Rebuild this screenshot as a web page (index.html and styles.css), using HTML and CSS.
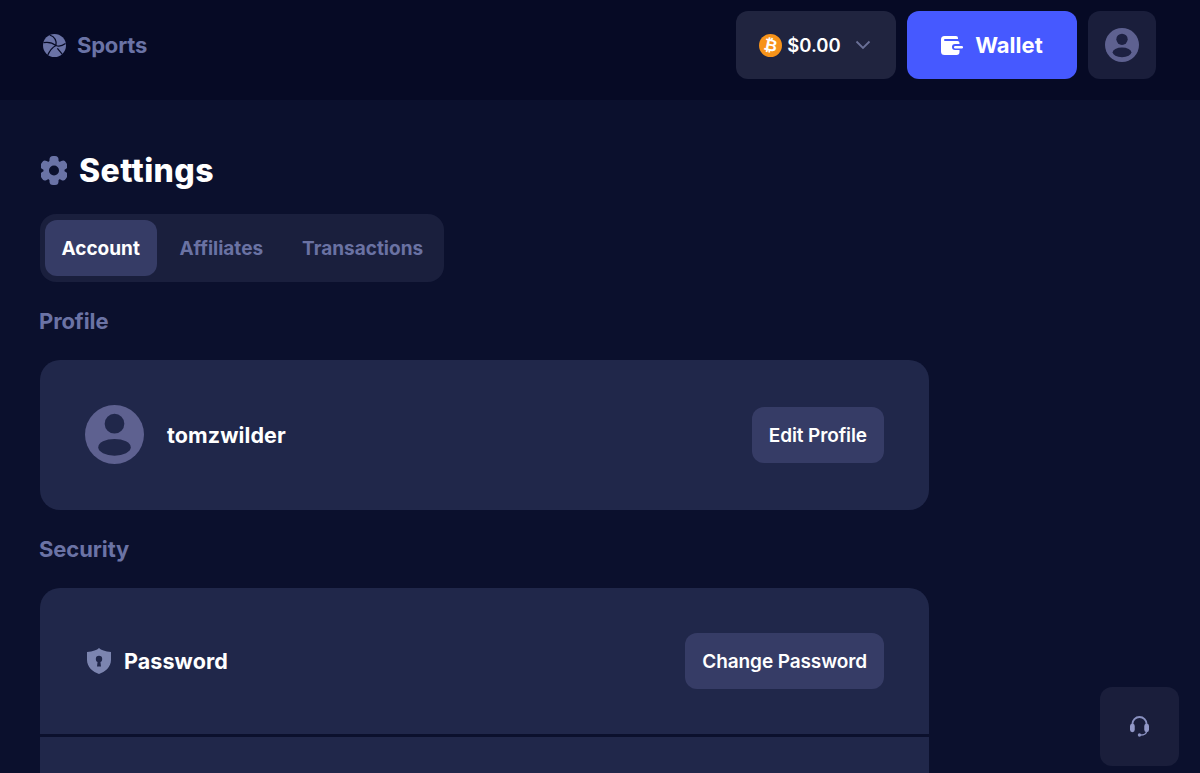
FILE: index.html
```html
<!DOCTYPE html>
<html lang="en">

<head>
    <meta charset="UTF-8">
    <meta name="viewport" content="width=device-width, initial-scale=1.0">
    <title>Settings</title>
    <link rel="stylesheet" href="styles.css">
</head>

<body>
    <header class="topbar">
        <a class="sports-link" href="#">
            <svg class="sports-icon" viewBox="0 0 24 24">
                <circle cx="12" cy="12" r="12" fill="#6a73a6" />
                <path d="M7 1 Q15 4 13.500 12 M0.500 9 Q8 7.500 13.500 12 Q8 15 5 22 M13.500 12 Q18 14 23.500 10 M15 15 L20 21" fill="none" stroke="#060a25" stroke-width="1.300" />
            </svg>
            <span>Sports</span>
        </a>
        <div class="topbar-actions">
            <button class="balance">
                <svg class="coin" viewBox="0 0 24 24">
                    <circle cx="12" cy="12" r="12" fill="#f7931a" />
                    <text x="12" y="17.500" text-anchor="middle" class="coin-mark" transform="rotate(12 12 12)">₿</text>
                </svg>
                <span class="balance-value">$0.00</span>
                <svg class="chevron" viewBox="0 0 16 10">
                    <path d="M1.500 1.500 L8 8 L14.500 1.500" fill="none" stroke="#6a7097" stroke-width="1.800" />
                </svg>
            </button>
            <button class="wallet">
                <svg class="wallet-icon" viewBox="0 0 22 19">
                    <path d="M3.500 0 H15 a2 2 0 0 1 2 2 V3 H4 a1 1 0 0 0 0 2 H16.500 a2 2 0 0 1 2 2 V8 H14 a3 3 0 0 0 0 6 H18.500 V16 a3 3 0 0 1 -3 3 H3.500 A3.500 3.500 0 0 1 0 15.500 V3.500 A3.500 3.500 0 0 1 3.500 0 Z" fill="#fff" />
                    <rect x="13" y="10" width="9" height="2.400" rx="1.200" fill="#fff" />
                </svg>
                <span>Wallet</span>
            </button>
            <button class="account-btn">
                <svg class="user-icon user-icon-small" viewBox="0 0 60 60">
                    <circle cx="30" cy="30" r="30" fill="#5e6190" />
                    <circle cx="30" cy="20" r="10" fill="#1d2142" />
                    <ellipse cx="30" cy="43" rx="16.500" ry="8.500" fill="#1d2142" />
                </svg>
            </button>
        </div>
    </header>

    <main class="page">
        <h1 class="page-title">
            <svg class="gear" viewBox="0 0 26 29">
                <g fill="#6a73a6">
                    <circle cx="13" cy="14.500" r="10.500" />
                    <rect x="8.500" y="0" width="9" height="29" rx="3.500" />
                    <rect x="8.500" y="0" width="9" height="29" rx="3.500" transform="rotate(60 13 14.500)" />
                    <rect x="8.500" y="0" width="9" height="29" rx="3.500" transform="rotate(120 13 14.500)" />
                </g>
                <circle cx="13" cy="14.500" r="5" fill="#0b102d" />
            </svg>
            Settings
        </h1>

        <nav class="tabs">
            <a class="tab active" href="#">Account</a>
            <a class="tab" href="#">Affiliates</a>
            <a class="tab" href="#">Transactions</a>
        </nav>

        <h2 class="section-title">Profile</h2>
        <section class="card">
            <div class="row profile-row">
                <div class="row-left">
                    <svg class="user-icon" viewBox="0 0 60 60">
                        <circle cx="30" cy="30" r="30" fill="#5e6190" />
                        <circle cx="30" cy="19" r="10" fill="#20274a" />
                        <ellipse cx="30" cy="43" rx="16.500" ry="8.500" fill="#20274a" />
                    </svg>
                    <span class="username">tomzwilder</span>
                </div>
                <button class="row-btn">Edit Profile</button>
            </div>
        </section>

        <h2 class="section-title">Security</h2>
        <section class="card">
            <div class="row password-row">
                <div class="row-left">
                    <svg class="shield" viewBox="0 0 24 26">
                        <path fill="#7c85b0" d="M12 0 C14 2 18 3.500 24 4 V12 C24 19 18 24 12 26 C6 24 0 19 0 12 V4 C6 3.500 10 2 12 0 Z" />
                        <circle cx="12" cy="11" r="3.200" fill="#20274a" />
                        <path d="M10.800 12 H13.200 L14 18.500 H10 Z" fill="#20274a" />
                    </svg>
                    <span class="row-label">Password</span>
                </div>
                <button class="row-btn">Change Password</button>
            </div>
            <div class="row next-row"></div>
        </section>
    </main>

    <button class="support">
        <svg class="headset" viewBox="0 0 20 24">
            <path d="M2.500 12 V9.500 a7.500 7.500 0 0 1 15 0 V12" fill="none" stroke="#8a91c0" stroke-width="2" />
            <rect x="0" y="9" width="5" height="9" rx="2.500" fill="#9298c8" />
            <rect x="15" y="9" width="5" height="9" rx="2.500" fill="#9298c8" />
            <path d="M17.500 17 Q17 21 11 21" fill="none" stroke="#8a91c0" stroke-width="1.500" />
            <circle cx="10" cy="21" r="1.800" fill="#8a91c0" />
        </svg>
    </button>
</body>

</html>
```

FILE: styles.css
```css
* {
    box-sizing: border-box;
}

html,
body {
    height: 100%;
}

body {
    margin: 0;
    overflow: hidden;
    background-color: #0b102d;
    color: #fff;
    font-family: Inter, "Liberation Sans", sans-serif;
}

a {
    text-decoration: none;
}

button {
    border: none;
    color: #fff;
    font-family: inherit;
    cursor: pointer;
}

.topbar {
    height: 100px;
    padding: 11px 44px 21px 43px;
    display: flex;
    align-items: center;
    justify-content: space-between;
    background-color: #060a25;
}

.sports-link {
    display: flex;
    align-items: center;
    gap: 11px;
    color: #6a73a6;
    font-size: 22px;
    font-weight: 700;
    letter-spacing: -0.2px;
}

.sports-icon {
    width: 23px;
    height: 23px;
}

.topbar-actions {
    display: flex;
    gap: 11px;
}

.topbar-actions button {
    height: 68px;
    border-radius: 12px;
    display: flex;
    align-items: center;
    justify-content: center;
}

.balance {
    width: 160px;
    padding: 0 2px 0 0;
    background-color: #20243f;
    gap: 5px;
    font-size: 18.500px;
    font-weight: 600;
}

.coin {
    width: 23px;
    height: 23px;
}

.coin-mark {
    fill: #fff;
    font-size: 17px;
    font-weight: 700;
    font-family: "DejaVu Sans", sans-serif;
}

.balance-value {
    margin-right: 9px;
}

.chevron {
    width: 16px;
    height: 10px;
}

.wallet {
    width: 170px;
    background-color: #4659ff;
    gap: 12px;
    font-size: 22px;
    font-weight: 700;
}

.wallet-icon {
    width: 22px;
    height: 19px;
}

.account-btn {
    width: 68px;
    background-color: #1a1e3b;
}

.user-icon {
    width: 59px;
    height: 59px;
    margin-bottom: 1px;
    flex-shrink: 0;
}

.user-icon-small {
    width: 34px;
    height: 34px;
}

.page {
    width: 929px;
    padding: 50px 0 0 40px;
}

.page-title {
    margin: 0 0 25px;
    height: 39px;
    padding-top: 1px;
    display: flex;
    align-items: center;
    gap: 12px;
    font-size: 32px;
    font-weight: 800;
    letter-spacing: 0.4px;
}

.gear {
    width: 26px;
    height: 29px;
    margin-left: 1px;
}

.tabs {
    width: 404px;
    height: 68px;
    padding: 6px 5px;
    display: flex;
    border-radius: 16px;
    background-color: #1a1f3d;
}

.tab {
    height: 56px;
    padding: 0 16.500px;
    margin-right: 6px;
    display: flex;
    align-items: center;
    border-radius: 12px;
    color: #6a72a3;
    font-size: 19px;
    font-weight: 700;
}

.tab.active {
    padding-right: 17px;
    background-color: #363c66;
    color: #fff;
}

.section-title {
    margin: 25px 0 25px -1px;
    height: 28px;
    line-height: 28px;
    color: #6b73a5;
    font-size: 22px;
    font-weight: 700;
    letter-spacing: -0.1px;
}

.card {
    border-radius: 20px;
    overflow: hidden;
    display: flex;
    flex-direction: column;
    gap: 3px;
}

.row {
    padding: 0 45px;
    display: flex;
    align-items: center;
    justify-content: space-between;
    background-color: #20274a;
}

.profile-row {
    height: 150px;
}

.password-row {
    height: 146px;
}

.next-row {
    height: 100px;
}

.row-left {
    display: flex;
    align-items: center;
}

.username {
    margin-left: 23px;
    font-size: 21.500px;
    font-weight: 700;
    letter-spacing: 0.1px;
}

.shield {
    width: 24px;
    height: 26px;
    margin-left: 2px;
}

.row-label {
    margin-left: 13px;
    font-size: 21.500px;
    font-weight: 700;
    letter-spacing: 0.1px;
}

.row-btn {
    height: 56px;
    padding: 0 17px;
    border-radius: 12px;
    background-color: #363c66;
    font-size: 19px;
    font-weight: 600;
    letter-spacing: -0.1px;
}

.support {
    position: fixed;
    left: 1100px;
    top: 687px;
    width: 79px;
    height: 79px;
    border-radius: 12px;
    background-color: #1a1e3b;
    display: flex;
    align-items: center;
    justify-content: center;
}

.headset {
    width: 19px;
    height: 23px;
}
```
